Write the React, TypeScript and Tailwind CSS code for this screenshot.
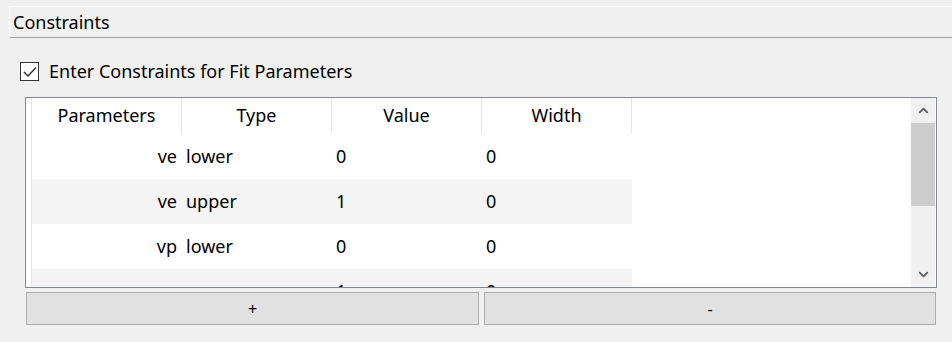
import { ChevronUp, ChevronDown } from "lucide-react";

type Row = { param: string; type: string; value: string; width: string };

const ROWS: Array<Row> = [
  { param: "ve", type: "lower", value: "0", width: "0" },
  { param: "ve", type: "upper", value: "1", width: "0" },
  { param: "vp", type: "lower", value: "0", width: "0" },
  { param: "vp", type: "upper", value: "1", width: "0" },
];

const HEADERS = ["Parameters", "Type", "Value", "Width"];

const App = () => {
  return (
    <div className="flex h-[342px] w-[952px] flex-col bg-[#f0f0f0] text-[18px] text-black [font-family:'Noto_Sans','Open_Sans',sans-serif]">
      {/* group title */}
      <div className="ml-[9px] mt-[6px] flex h-[32px] items-center border-l border-t border-b border-white border-b-[#a0a0a0] pl-[3px]">
        Constraints
      </div>

      {/* checkbox */}
      <label className="ml-[20px] mt-[24px] flex h-[19px] items-center gap-[10px]">
        <span className="flex h-[19px] w-[19px] items-center justify-center border border-[#333333] bg-white">
          <svg width="14" height="12" viewBox="0 0 14 12" fill="none">
            <path d="M1 6 L5 10 L13 1.5" stroke="#333333" strokeWidth="1.5" />
          </svg>
        </span>
        <span>Enter Constraints for Fit Parameters</span>
      </label>

      {/* table */}
      <div className="ml-[25px] mt-[16px] flex h-[191px] w-[912px] border border-[#828790] bg-white">
        <div className="w-[6px] shrink-0 border-r border-[#e5e5e5]" />
        <div className="flex-1 overflow-hidden">
          <div className="flex h-[36px]">
            {HEADERS.map((h) => (
              <div key={h} className="flex h-[35px] w-[150px] items-center justify-center border-r border-[#e5e5e5]">
                {h}
              </div>
            ))}
          </div>
          {ROWS.map((r, i) => (
            <div key={i} className={`flex h-[45px] w-[600px] items-center ${i % 2 === 1 ? "bg-[#f4f4f4]" : "bg-white"}`}>
              <div className="w-[150px] pr-[5px] text-right">{r.param}</div>
              <div className="w-[150px] pl-[4px]">{r.type}</div>
              <div className="w-[150px] pl-[4px]">{r.value}</div>
              <div className="w-[150px] pl-[4px]">{r.width}</div>
            </div>
          ))}
        </div>
        <div className="mr-[1px] flex w-[24px] shrink-0 flex-col bg-[#f0f0f0]">
          <div className="flex h-[25px] items-center justify-center text-[#606060]">
            <ChevronUp size={15} strokeWidth={3} />
          </div>
          <div className="h-[83px] bg-[#cdcdcd]" />
          <div className="flex-1" />
          <div className="flex h-[25px] items-center justify-center text-[#606060]">
            <ChevronDown size={15} strokeWidth={3} />
          </div>
        </div>
      </div>

      {/* buttons */}
      <div className="ml-[26px] mt-[4px] flex gap-[5px]">
        <button className="flex h-[33px] w-[453px] items-center justify-center border border-[#adadad] bg-[#e1e1e1] text-[16px]">
          +
        </button>
        <button className="flex h-[33px] w-[452px] items-center justify-center border border-[#adadad] bg-[#e1e1e1] text-[16px]">
          -
        </button>
      </div>
    </div>
  );
};

export default App;
